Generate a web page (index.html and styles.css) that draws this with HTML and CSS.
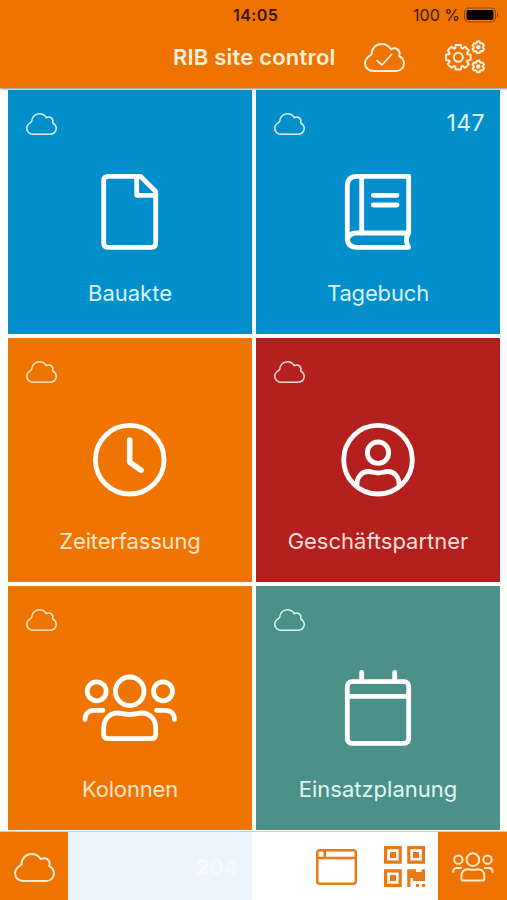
FILE: index.html
```html
<!DOCTYPE html>
<html lang="de">

	<head>
		<meta charset="UTF-8">
		<title>RIB site control</title>
		<link rel="stylesheet" href="styles.css">
	</head>

	<body>
		<svg class="defs">
			<symbol id="cloud" viewBox="0 0 41 29">
				<path d="M9.500 28 C4.500 28 1 24.500 1 20 C1 16.500 3.500 14 7.500 11.500 C7.500 5.500 12 1 17.500 1 C21.500 1 25 3 27 6.200 C31.500 3.500 37 7 35.300 13.200 C38.500 15 40 17.500 40 20.500 C40 24.800 36.500 28 32 28 Z" />
			</symbol>
			<symbol id="people" viewBox="0 0 100 100">
				<circle cx="49.700" cy="33.300" r="14.300" />
				<circle cx="16.700" cy="33.300" r="9.500" />
				<circle cx="83" cy="33.300" r="9.500" />
				<path d="M23.700 76.500 V70 C23.700 61 30 55 37.500 55 C42 55 43.500 56.500 49.700 56.500 C56 56.500 57.500 55 62 55 C69.500 55 75.700 61 75.700 70 V76.500 Q75.700 80.700 71.500 80.700 H28 Q23.700 80.700 23.700 76.500 Z" />
				<path d="M5 61.500 C5 55.500 9 52.300 14 52.300 H23 M94.500 61.500 C94.500 55.500 90.500 52.300 85.500 52.300 H76.500" />
			</symbol>
		</svg>
		<div id="wrap">
			<header class="header">
				<div class="status">
					<span class="time">14:05</span>
					<span class="percent">100 %</span>
					<svg class="battery" width="35" height="16" viewBox="0 0 35 16">
						<rect x="0.500" y="1" width="31" height="14" rx="4" />
						<rect class="level" x="2.500" y="3" width="27" height="10" rx="2" />
						<path d="M33 5.500 Q35.500 8 33 10.500 Z" />
					</svg>
				</div>
				<div class="bar">
					<h1>RIB site control</h1>
					<svg class="sync" width="41" height="30" viewBox="0 0 41 30">
						<use href="#cloud" width="41" height="29" />
						<path class="check" d="M13 17.500 L18 22 L27.500 11.500" />
					</svg>
					<svg class="gears" width="43" height="34" viewBox="0 0 43 34">
						<path transform="translate(14.300 17.300)" d="M-3.200 -9 L-2.600 -12.300 H2.600 L3.200 -9 L4.100 -8.630 L6.860 -10.540 L10.540 -6.860 L8.630 -4.100 L9 -3.200 L12.300 -2.600 V2.600 L9 3.200 L8.630 4.100 L10.540 6.860 L6.860 10.540 L4.100 8.630 L3.200 9 L2.600 12.300 H-2.600 L-3.200 9 L-4.100 8.630 L-6.860 10.540 L-10.540 6.860 L-8.630 4.100 L-9 3.200 L-12.300 2.600 V-2.600 L-9 -3.200 L-8.630 -4.100 L-10.540 -6.860 L-6.860 -10.540 L-4.100 -8.630 Z" />
						<circle cx="14.300" cy="17.300" r="4.500" />
						<g id="cog" transform="translate(34.300 7.300)">
							<path d="M-1.800 -4.200 L-1.400 -5.800 H1.400 L1.800 -4.200 L2.740 -3.660 L4.320 -4.110 L5.720 -1.690 L4.540 -0.540 V0.540 L5.720 1.690 L4.320 4.110 L2.740 3.660 L1.800 4.200 L1.400 5.800 H-1.400 L-1.800 4.200 L-2.740 3.660 L-4.320 4.110 L-5.720 1.690 L-4.540 0.540 V-0.540 L-5.720 -1.690 L-4.320 -4.110 L-2.740 -3.660 Z" />
							<circle r="1.300" />
						</g>
						<use href="#cog" y="19.200" />
					</svg>
				</div>
			</header>

			<main class="tiles">
				<div class="tile blue">
					<div class="top"><svg class="cloud"><use href="#cloud" /></svg></div>
					<svg class="icon" viewBox="0 0 100 100">
						<path d="M28 14.300 H60.500 L75.700 29.500 V81 Q75.700 85.300 71.400 85.300 H28 Q23.700 85.300 23.700 81 V18.600 Q23.700 14.300 28 14.300 Z" />
						<path d="M56.700 15 V33.300 H75" />
					</svg>
					<p class="bauakte">Bauakte</p>
				</div>
				<div class="tile blue">
					<div class="top"><svg class="cloud"><use href="#cloud" /></svg><span class="count">147</span></div>
					<svg class="icon" viewBox="0 0 100 100">
						<path d="M80.700 71 V14.300 H29 Q19.300 14.300 19.300 24 V76 Q19.300 85.300 29 85.300 H80.700 Q76 78 80.700 71 H29 Q20.500 71 19.300 78" />
						<path d="M33.700 15 V71 M45.300 33.300 H69 M45.300 43 H69" />
					</svg>
					<p class="tagebuch">Tagebuch</p>
				</div>
				<div class="tile orange">
					<div class="top"><svg class="cloud"><use href="#cloud" /></svg></div>
					<svg class="icon" viewBox="0 0 100 100">
						<circle cx="49.700" cy="49.700" r="34.300" />
						<path class="hand" d="M49.700 30 V52.300 L61 60.300" />
					</svg>
					<p class="zeit">Zeiterfassung</p>
				</div>
				<div class="tile red">
					<div class="top"><svg class="cloud"><use href="#cloud" /></svg></div>
					<svg class="icon" viewBox="0 0 100 100">
						<circle cx="50" cy="49.700" r="34.300" />
						<circle cx="50" cy="42.700" r="10.700" />
						<path d="M29 75 C28.500 67 34 61.500 40 61.500 C44 61.500 46 63 50 63 C54 63 56 61.500 60 61.500 C66 61.500 71.500 67 71 75" />
					</svg>
					<p class="partner">Geschäftspartner</p>
				</div>
				<div class="tile orange">
					<div class="top"><svg class="cloud"><use href="#cloud" /></svg></div>
					<svg class="icon" viewBox="0 0 100 100"><use href="#people" width="100" height="100" /></svg>
					<p class="kolonnen">Kolonnen</p>
				</div>
				<div class="tile green">
					<div class="top"><svg class="cloud"><use href="#cloud" /></svg></div>
					<svg class="icon" viewBox="0 0 100 100">
						<rect x="19.300" y="23.700" width="61.400" height="61.600" rx="4.500" />
						<path d="M19.300 38.300 H80.700 M33.700 23 V14.500 M66.700 23 V14.500" />
					</svg>
					<p class="einsatz">Einsatzplanung</p>
				</div>
			</main>

			<footer class="footer">
				<div class="side left">
					<svg width="41" height="29"><use href="#cloud" /></svg>
				</div>
				<div class="number">204</div>
				<div class="tools">
					<svg class="window" width="41" height="36" viewBox="0 0 41 36">
						<rect x="1.200" y="1.200" width="38.600" height="33.600" rx="2.500" />
						<path d="M1.200 9 H39.800 M8.700 1.200 V9" />
					</svg>
					<svg class="qr" width="41" height="41" viewBox="0 0 41 41">
						<path class="ring" d="M1.600 1.600 H16.200 V16.200 H1.600 Z M24.800 1.600 H39.400 V16.200 H24.800 Z M1.600 24.800 H16.200 V39.400 H1.600 Z" />
						<path d="M6 6 H12 V12 H6 Z M29 6 H35 V12 H29 Z M6 29 H12 V35 H6 Z" />
						<path d="M23.200 23.200 H32 V26 H37.500 V23.200 H41 V35 H29 V32 H26.500 V41 H23.200 Z M32 38 H35 V41 H32 Z M38 38 H41 V41 H38 Z" />
					</svg>
				</div>
				<div class="side right">
					<svg width="44" height="44"><use href="#people" /></svg>
				</div>
			</footer>
		</div>
	</body>

</html>
```

FILE: styles.css
```css
* {
	margin: 0;
	padding: 0;
	box-sizing: border-box;
}

body {
	background: #fff;
	font-family: Inter, "Liberation Sans", sans-serif;
}

svg {
	display: block;
	flex: none;
	fill: none;
	stroke-linecap: round;
	stroke-linejoin: round;
}

.defs {
	position: absolute;
	width: 0;
	height: 0;
}

#wrap {
	width: 507px;
	height: 900px;
	overflow: hidden;
	display: flex;
	flex-direction: column;
}

/* header */
.header {
	position: relative;
	flex: none;
	height: 88px;
	background: #ef7300;
	box-shadow: 0 1px 2px rgba(80, 80, 80, 0.7);
}

.status {
	height: 30px;
	padding: 0 8px 0 233px;
	display: flex;
	align-items: center;
	font-size: 16px;
	color: #351600;
}

.time {
	font-weight: 600;
	letter-spacing: 0.4px;
}

.percent {
	margin-left: auto;
	margin-right: 4px;
}

.battery rect {
	stroke: #8f4500;
}

.battery .level {
	fill: #000;
	stroke: none;
}

.battery path {
	fill: #8f4500;
}

.bar {
	height: 54px;
	padding: 0 20px 0 173px;
	display: flex;
	align-items: center;
	stroke: #fff0dc;
}

h1 {
	width: 191px;
	font-size: 22px;
	font-weight: 600;
	letter-spacing: 0.2px;
	white-space: nowrap;
	color: #fff0dc;
	stroke: none;
}

.sync {
	margin-top: 1px;
	stroke-width: 2;
}

.check {
	stroke-width: 1.7;
}

.gears {
	margin-left: auto;
	stroke-width: 2;
}

/* tiles */
.tiles {
	flex: none;
	height: 743px;
	padding: 2px 7px 0 8px;
	display: grid;
	grid-template-columns: 244px 244px;
	grid-template-rows: repeat(3, 244px);
	gap: 4px;
}

.tile {
	display: flex;
	flex-direction: column;
	align-items: center;
	color: #ddf3fc;
}

.blue {
	background: #008fca;
}

.orange {
	background: #f07500;
	color: #ffe5c8;
}

.red {
	background: #b3201e;
	color: #fbdedb;
}

.green {
	background: #4b9089;
	color: #e2f7f5;
}

.top {
	width: 100%;
	height: 72px;
	padding: 22px 15px 0 18px;
	display: flex;
	justify-content: space-between;
}

.cloud {
	width: 31px;
	height: 24px;
	stroke: currentColor;
	stroke-width: 2;
}

.count {
	font-size: 23px;
	line-height: 23px;
	letter-spacing: 0.4px;
}

.icon {
	width: 100px;
	height: 100px;
	stroke: #fff;
	stroke-width: 4.8;
}

.hand {
	stroke-width: 5.5;
}

.tile p {
	padding-top: 17px;
	font-size: 22px;
	line-height: 28px;
	white-space: nowrap;
}

.tile .tagebuch,
.tile .zeit,
.tile .kolonnen {
	letter-spacing: -0.15px;
}

/* footer */
.footer {
	flex: none;
	height: 69px;
	display: grid;
	grid-template-columns: 68px 184px 186px 69px;
	border-top: 1px solid #fac394;
}

.side {
	display: flex;
	align-items: center;
	justify-content: center;
	background: #ef7300;
	stroke: #ffebd2;
	stroke-width: 2;
}

.right {
	stroke-width: 4.5;
}

.number {
	padding-right: 15px;
	background: #edf6fd;
	font-size: 22px;
	font-weight: 700;
	letter-spacing: -0.8px;
	line-height: 70px;
	text-align: right;
	color: #f6fafe;
}

.tools {
	padding: 0 13px 1px 0;
	display: flex;
	align-items: center;
	justify-content: flex-end;
	gap: 27px;
	stroke: #e97817;
}

.window {
	stroke-width: 2.5;
}

.qr path {
	fill: #e97817;
	stroke: none;
}

.qr .ring {
	fill: none;
	stroke: #e97817;
	stroke-width: 3.2;
	stroke-linejoin: miter;
}
```
